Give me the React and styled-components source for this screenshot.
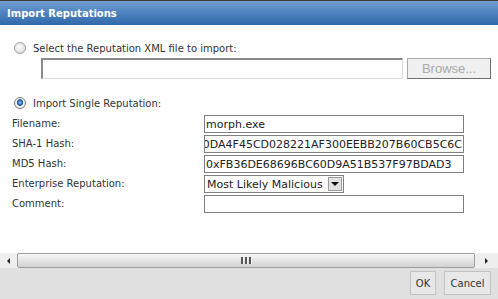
import React from "react";
import styled, { createGlobalStyle } from "styled-components";

const GlobalStyle = createGlobalStyle`
  html, body {
    margin: 0;
    padding: 0;
    background: #ffffff;
  }
`;

const Dialog = styled.div`
  width: 498px;
  height: 299px;
  display: flex;
  flex-direction: column;
  font-family: "DejaVu Sans", Verdana, sans-serif;
  font-size: 10px;
  color: #333;
  overflow: hidden;
`;

const TitleBar = styled.div`
  height: 24px;
  flex-shrink: 0;
  border-top: 1px solid #3a3a3a;
  background: linear-gradient(#6f9ed2, #2f68aa);
  display: flex;
  align-items: center;
  padding-left: 7px;
  color: #fff;
  font-weight: bold;
  font-size: 10px;
`;

const Body = styled.div`
  height: 228px;
  box-sizing: border-box;
  flex-shrink: 0;
  background: #fff;
  padding-top: 16px;
`;

const RadioRow = styled.label`
  display: flex;
  align-items: center;
  gap: 7px;
  height: 14px;
  padding-left: 14px;
  margin-top: ${(p) => p.top || 0}px;
`;

const Radio = styled.span`
  width: 12px;
  height: 12px;
  box-sizing: border-box;
  border-radius: 50%;
  border: 1px solid ${(p) => (p.checked ? "#7d7d7d" : "#a3a3a3")};
  background: ${(p) =>
    p.checked
      ? "radial-gradient(circle at 50% 45%, #8ec0f5 0, #2a63b8 2.5px, #1c4a92 3px, #fff 3.6px, #e4e4e4 6px)"
      : "radial-gradient(circle at 45% 40%, #fdfdfd, #d0d0d0)"};
`;

const FileRow = styled.div`
  display: flex;
  margin: 3px 0 0 41px;
  gap: 4px;
`;

const FileInput = styled.div`
  width: 362px;
  height: 21px;
  box-sizing: border-box;
  border-top: 2px solid #8a8a8a;
  border-left: 2px solid #8a8a8a;
  border-right: 1px solid #dcdcdc;
  border-bottom: 1px solid #dcdcdc;
`;

const BrowseButton = styled.button`
  width: 84px;
  height: 21px;
  box-sizing: border-box;
  border: 1px solid #a8a8a8;
  border-right-color: #6e6e6e;
  border-bottom-color: #6e6e6e;
  background: #f0f0f0;
  color: #a9a9a9;
  font-family: "Liberation Sans", Arial, sans-serif;
  font-size: 13px;
  padding: 0;
`;

const Form = styled.div`
  display: grid;
  grid-template-columns: 192px 260px;
  grid-auto-rows: 18px;
  row-gap: 2px;
  margin: 5px 0 0 12px;
  align-items: center;
`;

const Label = styled.div`
  line-height: 18px;
`;

const Field = styled.div`
  height: 18px;
  box-sizing: border-box;
  width: ${(p) => p.width || 260}px;
  border: 1px solid #808080;
  display: flex;
  align-items: center;
  justify-content: ${(p) => (p.scrolled ? "flex-end" : "flex-start")};
  overflow: hidden;
  white-space: nowrap;
  padding: 0 1px;
  font-family: "DejaVu Sans", Verdana, sans-serif;
  font-size: 11px;
  color: #222;
`;

const SelectBox = styled(Field)`
  justify-content: space-between;
  padding: 0 1px 0 2px;
`;

const DropButton = styled.span`
  width: 14px;
  height: 14px;
  box-sizing: border-box;
  background: #e2e2e2;
  border: 1px solid #9a9a9a;
  display: flex;
  align-items: center;
  justify-content: center;
  &::after {
    content: "";
    border-left: 4px solid transparent;
    border-right: 4px solid transparent;
    border-top: 4px solid #111;
  }
`;

const ScrollBar = styled.div`
  height: 15px;
  flex-shrink: 0;
  display: flex;
  background: #eeeeee;
`;

const Arrow = styled.div`
  width: ${(p) => p.width}px;
  display: flex;
  align-items: center;
  justify-content: center;
  &::after {
    content: "";
    border-top: 3px solid transparent;
    border-bottom: 3px solid transparent;
    ${(p) =>
      p.dir === "left"
        ? "border-right: 3px solid #222;"
        : "border-left: 3px solid #222;"}
  }
`;

const Thumb = styled.div`
  flex: 1;
  box-sizing: border-box;
  border: 1px solid #9e9e9e;
  border-radius: 2px;
  background: linear-gradient(#f7f7f7, #e4e4e4 50%, #d2d2d2);
  display: flex;
  align-items: center;
  justify-content: center;
  gap: 1px;
`;

const Grip = styled.span`
  width: 2px;
  height: 7px;
  background: #555;
  border-right: 1px solid #f0f0f0;
`;

const Footer = styled.div`
  flex: 1;
  background: #e0e0e0;
  display: flex;
  justify-content: flex-end;
  align-items: flex-start;
  gap: 8px;
  padding: 3px 7px 0 0;
`;

const FooterButton = styled.button`
  width: ${(p) => p.width}px;
  height: 24px;
  box-sizing: border-box;
  border: 1px solid #c2c2c2;
  background: #e8e8e8;
  color: #333;
  font-family: "DejaVu Sans", Verdana, sans-serif;
  font-size: 10px;
  padding: 0;
`;

const rows = [
  { label: "Filename:", value: "morph.exe" },
  { label: "SHA-1 Hash:", value: "0x7A930DA4F45CD028221AF300EEBB207B60CB5C6C", scrolled: true },
  { label: "MD5 Hash:", value: "0xFB36DE68696BC60D9A51B537F97BDAD3" },
];

export default function App() {
  return (
    <>
      <GlobalStyle />
      <Dialog>
        <TitleBar>Import Reputations</TitleBar>
        <Body>
          <RadioRow>
            <Radio />
            Select the Reputation XML file to import:
          </RadioRow>
          <FileRow>
            <FileInput />
            <BrowseButton>Browse...</BrowseButton>
          </FileRow>
          <RadioRow top={17}>
            <Radio checked />
            Import Single Reputation:
          </RadioRow>
          <Form>
            {rows.map((r) => (
              <React.Fragment key={r.label}>
                <Label>{r.label}</Label>
                <Field scrolled={r.scrolled}>{r.value}</Field>
              </React.Fragment>
            ))}
            <Label>Enterprise Reputation:</Label>
            <SelectBox width={140}>
              Most Likely Malicious
              <DropButton />
            </SelectBox>
            <Label>Comment:</Label>
            <Field />
          </Form>
        </Body>
        <ScrollBar>
          <Arrow dir="left" width={17} />
          <Thumb>
            <Grip />
            <Grip />
            <Grip />
          </Thumb>
          <Arrow dir="right" width={23} />
        </ScrollBar>
        <Footer>
          <FooterButton width={26}>OK</FooterButton>
          <FooterButton width={47}>Cancel</FooterButton>
        </Footer>
      </Dialog>
    </>
  );
}
